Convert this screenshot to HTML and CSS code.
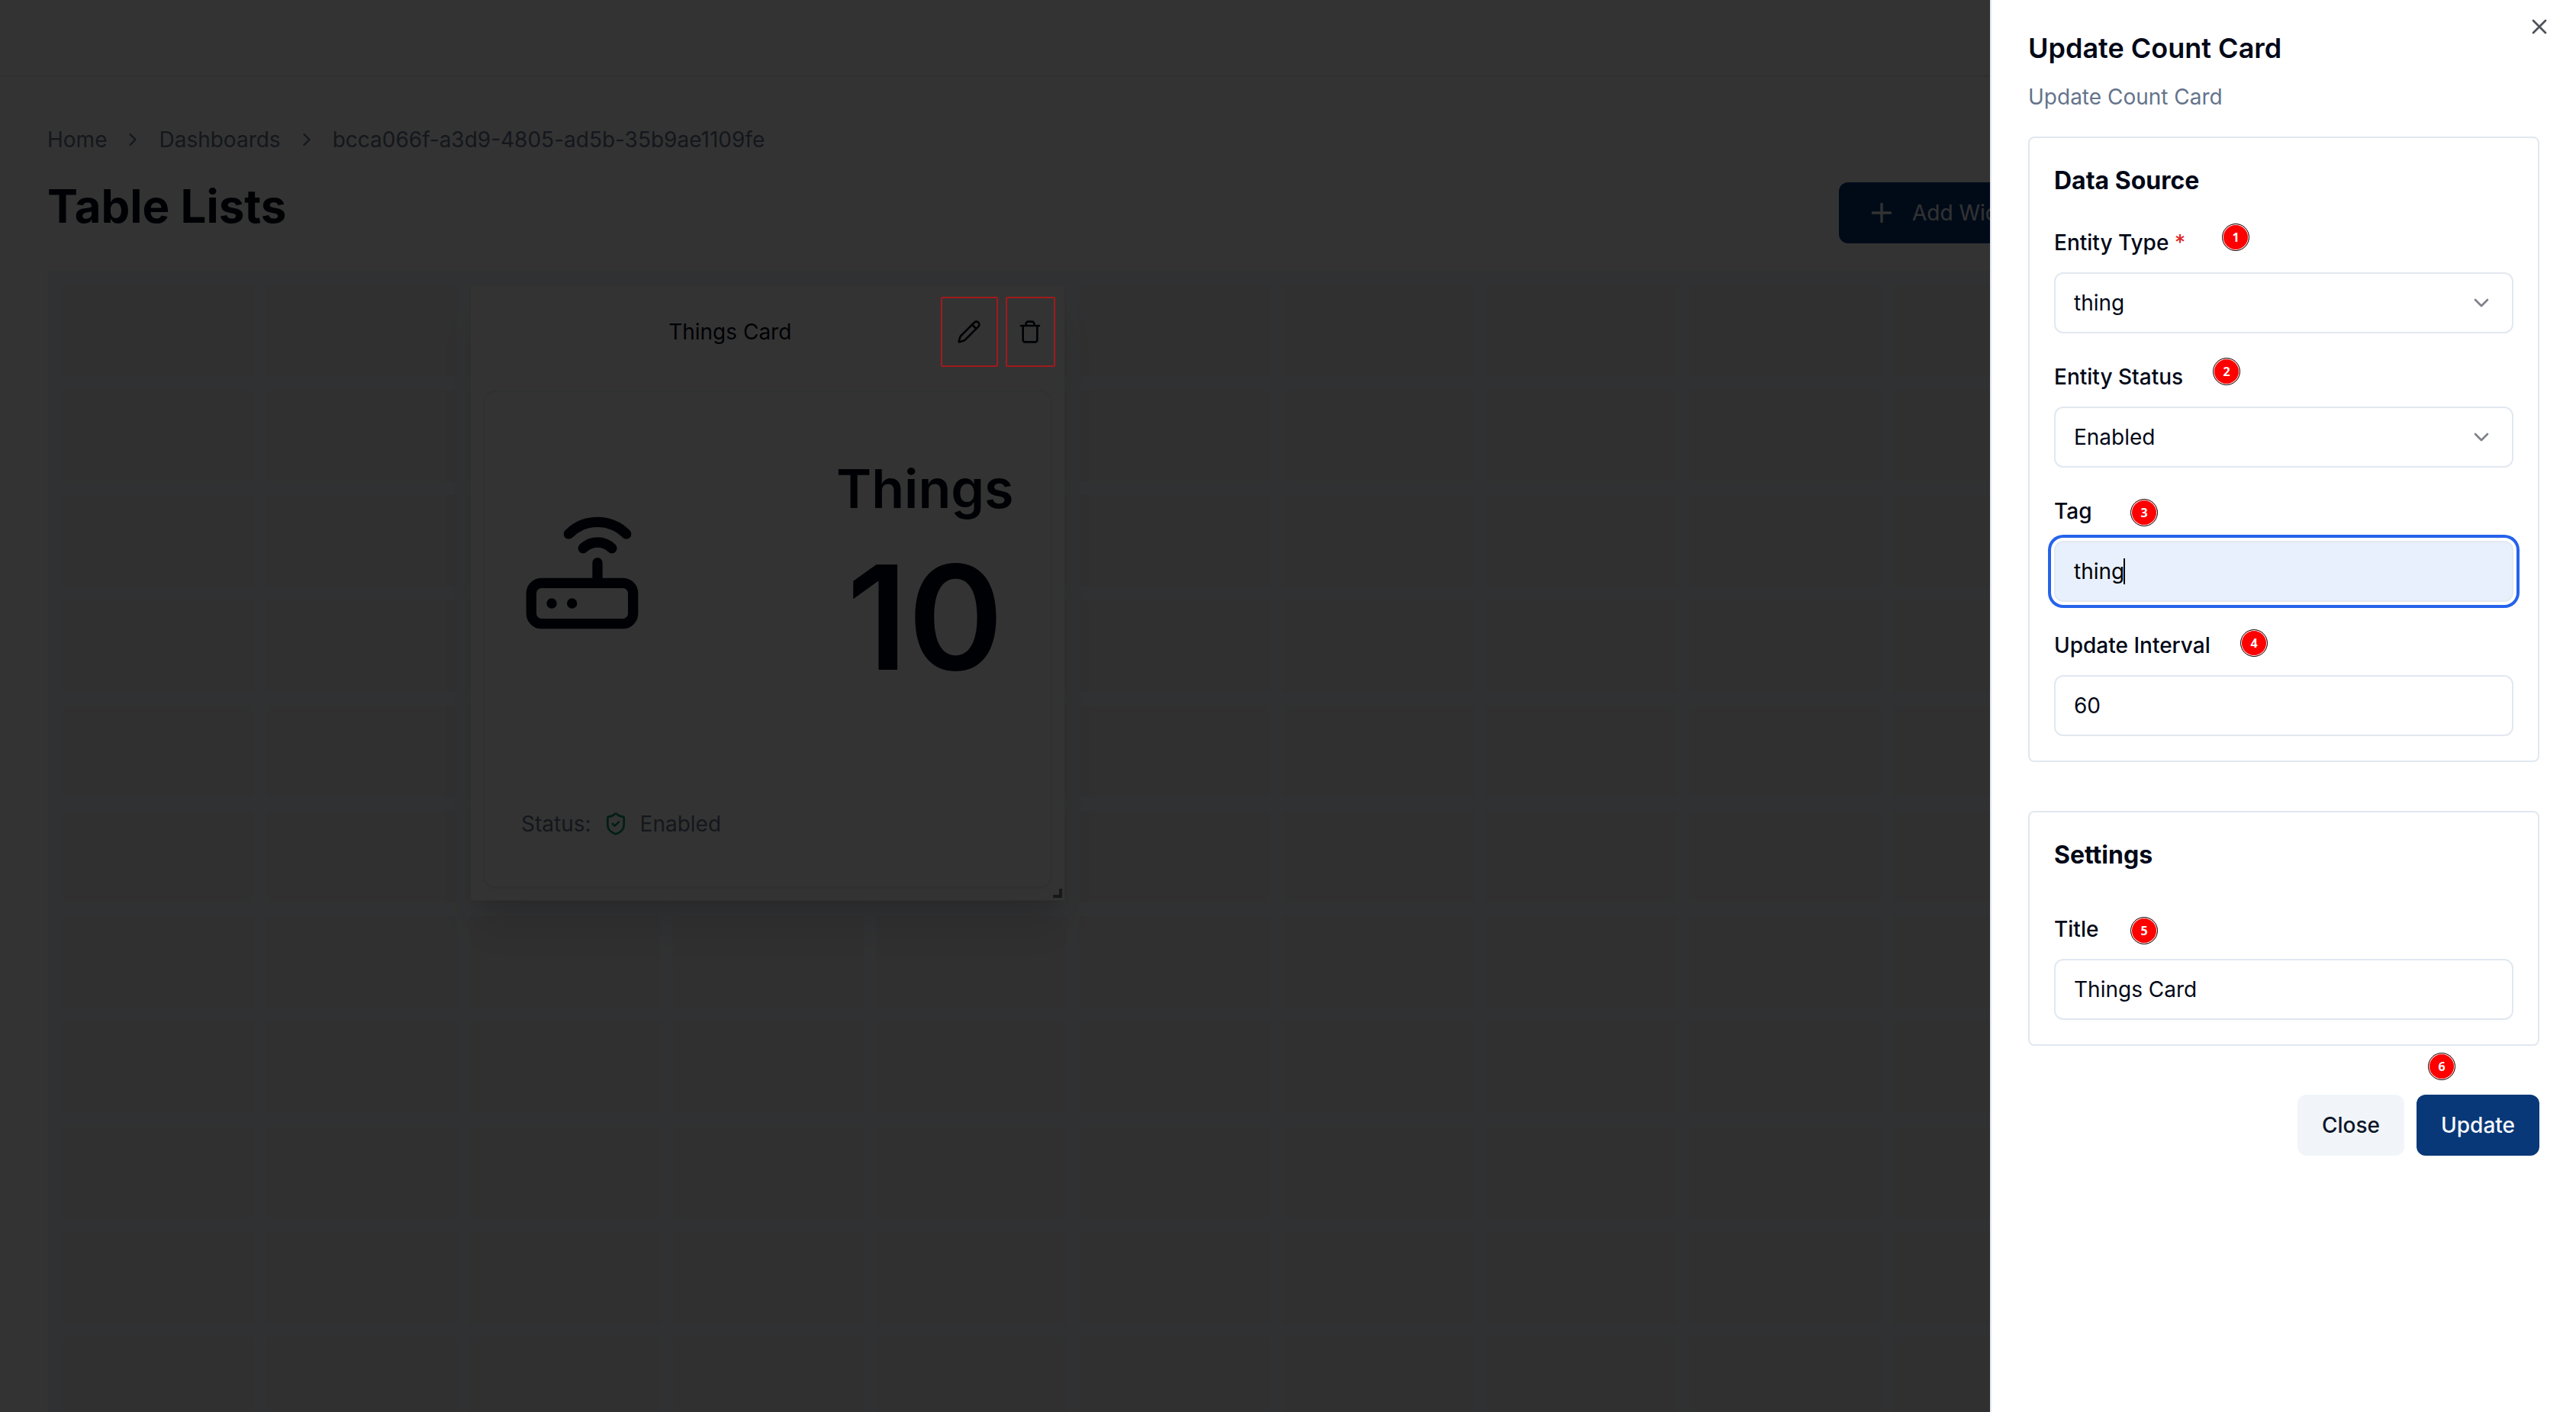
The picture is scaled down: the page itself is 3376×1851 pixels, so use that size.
FILE: index.html
```html
<!DOCTYPE html>
<html lang="en">
<head>
<meta charset="utf-8">
<title>Table Lists</title>
<link rel="stylesheet" href="styles.css">
</head>
<body>
<div class="app">
  <header class="topbar"></header>
  <main class="page">
    <nav class="breadcrumb" aria-label="Breadcrumb">
      <a href="#">Home</a>
      <svg class="icon icon-28" viewBox="0 0 24 24"><path d="m9 18 6-6-6-6"/></svg>
      <a href="#">Dashboards</a>
      <svg class="icon icon-28" viewBox="0 0 24 24"><path d="m9 18 6-6-6-6"/></svg>
      <a href="#">bcca066f-a3d9-4805-ad5b-35b9ae1109fe</a>
    </nav>
    <div class="heading">
      <h1>Table Lists</h1>
      <div class="actions">
        <button class="btn btn-primary btn-add" type="button">
          <svg class="icon icon-40" viewBox="0 0 24 24"><path d="M5 12h14M12 5v14"/></svg>
          Add Widget
        </button>
      </div>
    </div>
    <section class="board">
      <div class="board-grid">
        <article class="widget">
          <header class="widget-head">
            <h2>Things Card</h2>
            <div class="widget-tools">
              <button class="tool tool-edit" type="button" aria-label="Edit">
                <svg class="icon icon-32" viewBox="0 0 24 24"><path d="M21.174 6.812a1 1 0 0 0-3.986-3.987L3.842 16.174a2 2 0 0 0-.5.83l-1.321 4.352a.5.5 0 0 0 .623.622l4.353-1.32a2 2 0 0 0 .83-.497z"/><path d="m15 5 4 4"/></svg>
              </button>
              <button class="tool" type="button" aria-label="Delete">
                <svg class="icon icon-32" viewBox="0 0 24 24"><path d="M3 6h18M19 6v14c0 1-1 2-2 2H7c-1 0-2-1-2-2V6M8 6V4c0-1 1-2 2-2h4c1 0 2 1 2 2v2"/></svg>
              </button>
            </div>
          </header>
          <div class="count-card">
            <div class="count-body">
              <svg class="icon icon-160" viewBox="0 0 24 24"><rect width="20" height="8" x="2" y="14" rx="2"/><path d="M6.01 18H6M10.01 18H10M15 10v4M17.84 7.17a4 4 0 0 0-5.66 0M20.66 4.34a8 8 0 0 0-11.31 0"/></svg>
              <div class="count">
                <p class="count-label">Things</p>
                <p class="count-value">10</p>
              </div>
            </div>
            <p class="status">
              <span>Status:</span>
              <svg class="icon icon-32 status-icon" viewBox="0 0 24 24"><path d="M20 13c0 5-3.5 7.500-7.660 8.950a1 1 0 0 1-.67-.01C7.500 20.500 4 18 4 13V6a1 1 0 0 1 1-1c2 0 4.500-1.200 6.240-2.720a1.170 1.170 0 0 1 1.520 0C14.510 3.810 17 5 19 5a1 1 0 0 1 1 1z"/><path d="m9 12 2 2 4-4"/></svg>
              <span>Enabled</span>
            </p>
          </div>
          <span class="resize-handle"></span>
        </article>
      </div>
    </section>
  </main>
</div>
<div class="overlay"></div>
<aside class="sheet" role="dialog" aria-labelledby="sheet-title">
  <button class="sheet-close" type="button" aria-label="Close panel">
    <svg class="icon icon-32" viewBox="0 0 24 24"><path d="M18 6 6 18M6 6l12 12"/></svg>
  </button>
  <header class="sheet-head">
    <h2 id="sheet-title">Update Count Card</h2>
    <p>Update Count Card</p>
  </header>
  <form class="form">
    <section class="group">
      <h3>Data Source</h3>
      <div class="field">
        <div class="label-row">
          <label for="type">Entity Type <span class="required">*</span></label>
          <span class="step step-1">1</span>
        </div>
        <div class="select">
          <select id="type"><option>thing</option></select>
          <svg class="icon icon-32" viewBox="0 0 24 24"><path d="m6 9 6 6 6-6"/></svg>
        </div>
      </div>
      <div class="field">
        <div class="label-row">
          <label for="status">Entity Status</label>
          <span class="step step-2">2</span>
        </div>
        <div class="select">
          <select id="status"><option>Enabled</option></select>
          <svg class="icon icon-32" viewBox="0 0 24 24"><path d="m6 9 6 6 6-6"/></svg>
        </div>
      </div>
      <div class="field">
        <div class="label-row">
          <label for="tag">Tag</label>
          <span class="step step-3">3</span>
        </div>
        <div class="active-input">
          <input id="tag" type="text" value="thing">
          <span class="caret"></span>
        </div>
      </div>
      <div class="field">
        <div class="label-row">
          <label for="interval">Update Interval</label>
          <span class="step step-4">4</span>
        </div>
        <input id="interval" type="text" value="60">
      </div>
    </section>
    <section class="group group-settings">
      <h3>Settings</h3>
      <div class="field">
        <div class="label-row">
          <label for="title">Title</label>
          <span class="step step-3">5</span>
        </div>
        <input id="title" type="text" value="Things Card">
      </div>
    </section>
    <footer class="form-actions">
      <button class="btn btn-secondary" type="button">Close</button>
      <button class="btn btn-primary" type="button">Update</button>
      <span class="step step-6">6</span>
    </footer>
  </form>
</aside>
</body>
</html>
```
FILE: styles.css
```css
* {
  box-sizing: border-box;
}

body,
h1,
h2,
h3,
p {
  margin: 0;
}

body {
  background: #ffffff;
  color: #020817;
  font-family: Inter, "Liberation Sans", sans-serif;
  font-size: 28px;
  line-height: 40px;
}

button,
input,
select {
  font: inherit;
  color: inherit;
}

.icon {
  display: block;
  flex: none;
  fill: none;
  stroke: currentColor;
  stroke-width: 2;
  stroke-linecap: round;
  stroke-linejoin: round;
}

.icon-28 { width: 28px; height: 28px; }
.icon-32 { width: 32px; height: 32px; }
.icon-40 { width: 40px; height: 40px; }
.icon-160 { width: 160px; height: 160px; }

.app {
  display: flex;
  flex-direction: column;
  height: 100vh;
  overflow: hidden;
}

.topbar {
  flex: none;
  height: 101px;
  border-bottom: 2px solid #e8ecf0;
}

.page {
  flex: 1;
  min-height: 0;
  display: flex;
  flex-direction: column;
  padding: 62px 64px 0 62px;
}

.breadcrumb {
  display: flex;
  align-items: center;
  gap: 20px;
  color: #64748b;
}

.breadcrumb a {
  color: inherit;
  text-decoration: none;
}

.heading {
  display: flex;
  justify-content: space-between;
  align-items: flex-start;
  margin: 31px 0 36px;
}

.heading h1 {
  font-size: 60px;
  font-weight: 700;
  line-height: 72px;
}

.actions {
  flex: 0 0 902px;
  padding-top: 5px;
}

.btn {
  display: inline-flex;
  align-items: center;
  height: 80px;
  padding: 0 32px;
  border: 0;
  border-radius: 12px;
  font-weight: 500;
}

.btn-primary {
  background: #083878;
  color: #f8fafc;
}

.btn-secondary {
  background: #f1f5f9;
  color: #0f172a;
}

.btn-add {
  gap: 20px;
  padding: 0 36px;
  font-weight: 400;
}

/* Drop area: 12 columns of cells, drawn as a repeating tile */
.board {
  flex: 1;
  min-height: 0;
  overflow: hidden;
  padding: 18px 48px 0 20px;
  background: #f1f5f9;
}

.board-grid {
  display: grid;
  grid-template-columns: repeat(12, 1fr);
  grid-auto-rows: 120px;
  gap: 18px 16px;
  height: 100%;
  background:
    linear-gradient(to right, transparent calc(100% - 16px), #f1f5f9 0),
    linear-gradient(to bottom, transparent calc(100% - 18px), #f1f5f9 0),
    #eeeeee;
  background-size: calc((100% + 16px) / 12) 138px;
}

.widget {
  grid-column: 3 / span 3;
  grid-row: 1 / span 6;
  display: flex;
  flex-direction: column;
  position: relative;
  margin: 0 3px 2px 1px;
  padding: 0 16px 16px;
  border: 1px solid #e8ecf0;
  background: #ffffff;
  box-shadow: 0 40px 50px -6px rgba(0, 0, 0, 0.1), 0 16px 20px -12px rgba(0, 0, 0, 0.1);
}

.widget-head {
  display: grid;
  grid-template-columns: 1fr auto;
  align-items: center;
  height: 138px;
  padding-bottom: 16px;
}

.widget-head h2 {
  font-size: 28px;
  font-weight: 400;
  line-height: 40px;
  padding-left: 48px;
  text-align: center;
}

.widget-tools {
  display: flex;
  gap: 10px;
  margin-right: -4px;
}

.tool {
  position: relative;
  display: grid;
  place-items: center;
  width: 65px;
  height: 92px;
  padding: 0;
  border: 0;
  background: none;
}

.tool-edit {
  width: 75px;
}

/* Highlight frames stay bright above the dimmed page */
.tool::after {
  content: "";
  position: absolute;
  inset: 0;
  z-index: 20;
  border: 2px solid #a01a1c;
  border-radius: 2px;
}

.count-card {
  flex: 1;
  display: flex;
  flex-direction: column;
  justify-content: space-between;
  padding: 48px 48px 62px;
  border: 2px solid #eceff2;
  border-radius: 16px;
  box-shadow: 0 2px 4px rgba(0, 0, 0, 0.05);
}

.count-body {
  display: flex;
  justify-content: space-between;
  align-items: center;
  height: 378px;
}

.count {
  padding-top: 36px;
  text-align: center;
}

.count-label {
  font-size: 70px;
  font-weight: 600;
  line-height: 80px;
}

.count-value {
  font-size: 190px;
  font-weight: 600;
  line-height: 256px;
}

.status {
  display: flex;
  align-items: center;
  gap: 16px;
  color: #64748b;
}

.status-icon {
  color: #059669;
}

.resize-handle {
  position: absolute;
  right: 3px;
  bottom: 3px;
  width: 12px;
  height: 12px;
  border: solid #777777;
  border-width: 0 4px 4px 0;
}

.overlay {
  position: fixed;
  inset: 0;
  z-index: 10;
  background: rgba(0, 0, 0, 0.8);
}

.sheet {
  position: fixed;
  top: 0;
  right: 0;
  bottom: 0;
  z-index: 30;
  width: 768px;
  padding: 44px 48px;
  border-left: 2px solid #e2e8f0;
  background: #ffffff;
}

.sheet-close {
  position: absolute;
  top: 19px;
  right: 32px;
  padding: 0;
  border: 0;
  background: none;
  opacity: 0.7;
}

.sheet-head {
  display: flex;
  flex-direction: column;
  gap: 25px;
  margin-bottom: 32px;
}

.sheet-head h2 {
  font-size: 36px;
  font-weight: 600;
  line-height: 38px;
}

.sheet-head p {
  color: #64748b;
}

.form {
  display: flex;
  flex-direction: column;
  gap: 64px;
}

.group {
  display: flex;
  flex-direction: column;
  gap: 42px;
  padding: 32px;
  border: 2px solid #e2e8f0;
  border-radius: 8px;
}

.group-settings {
  gap: 58px;
}

.group h3 {
  font-size: 32px;
  font-weight: 700;
  line-height: 48px;
}

.field {
  display: flex;
  flex-direction: column;
  gap: 24px;
}

.label-row {
  position: relative;
  display: flex;
  font-weight: 500;
  line-height: 30px;
}

.required {
  color: #dc2626;
}

.field input,
.field select {
  display: block;
  width: 100%;
  height: 80px;
  padding: 0 24px;
  border: 2px solid #e2e8f0;
  border-radius: 12px;
  background: #ffffff;
  outline: none;
  appearance: none;
}

.select,
.active-input {
  position: relative;
}

.select .icon {
  position: absolute;
  top: 24px;
  right: 26px;
  opacity: 0.5;
  pointer-events: none;
}

.active-input input {
  background: #e8f0fe;
  color: #000000;
  box-shadow: 0 0 0 4px #ffffff, 0 0 0 8px #2563eb;
}

.caret {
  position: absolute;
  top: 23px;
  left: 91px;
  width: 2px;
  height: 34px;
  background: #000000;
}

.form-actions {
  position: relative;
  display: flex;
  justify-content: flex-end;
  gap: 16px;
}

/* Numbered callouts */
.step {
  position: absolute;
  width: 36px;
  height: 36px;
  border: 1px solid #111111;
  border-radius: 50%;
  background: #ff0000;
  box-shadow: inset 0 0 0 1px #ffffff;
  color: #ffffff;
  font-family: "Open Sans", sans-serif;
  font-size: 16px;
  font-weight: 700;
  line-height: 34px;
  text-align: center;
}

.step-1 { left: 220px; top: -10px; }
.step-2 { left: 208px; top: -10px; }
.step-3 { left: 100px; top: -1px; }
.step-4 { left: 244px; top: -6px; }
.step-6 { right: 110px; top: -55px; }
```
